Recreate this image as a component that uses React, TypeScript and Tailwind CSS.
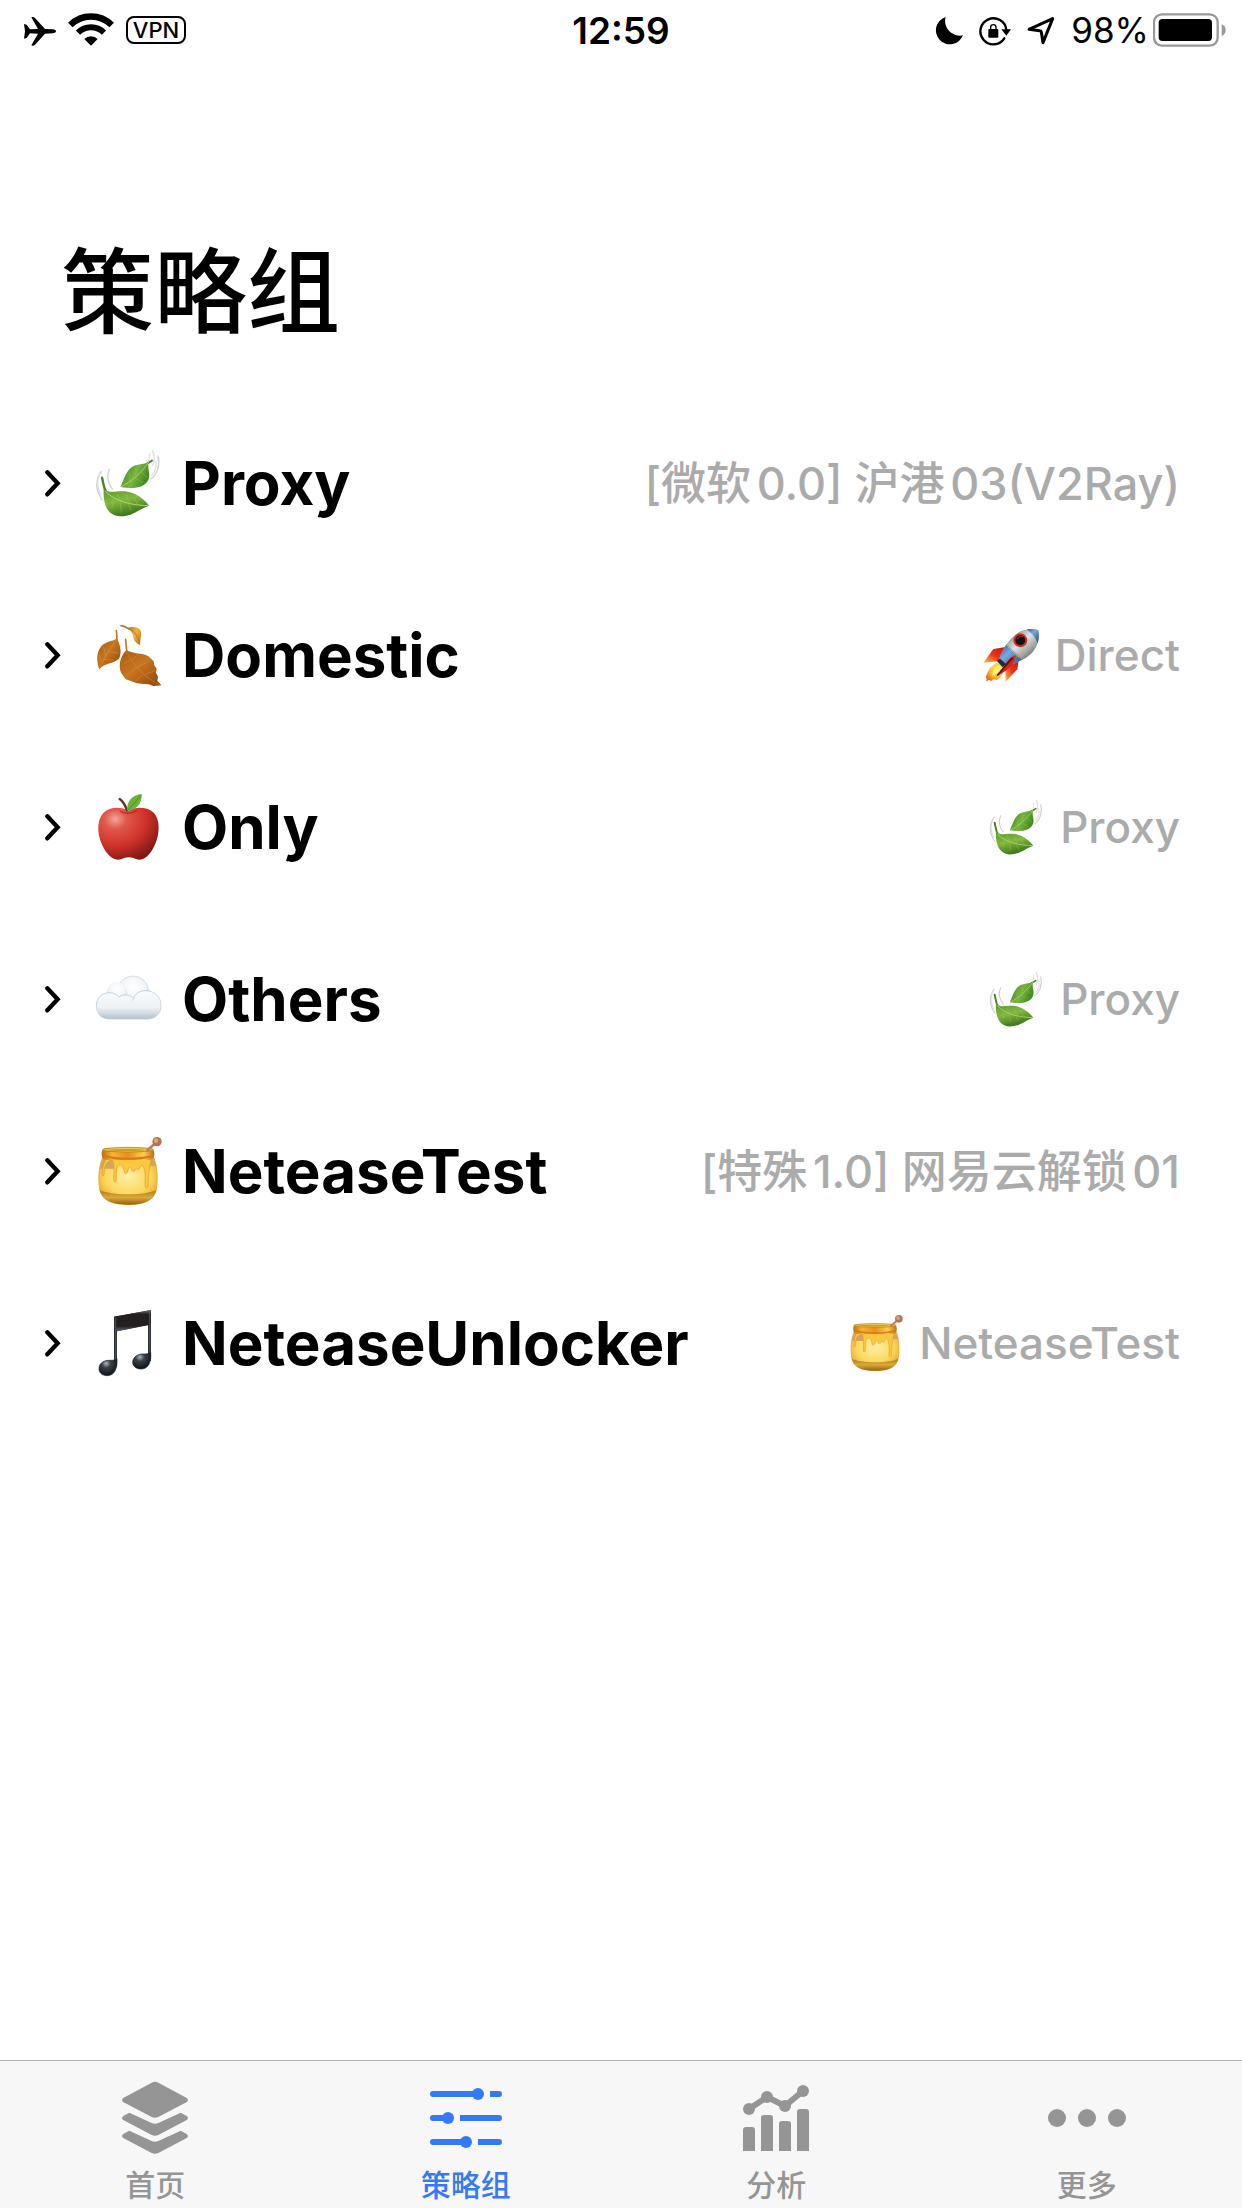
import type { ReactNode } from "react";

function Gradients() {
  return (
    <svg className="absolute h-0 w-0" aria-hidden="true">
      <defs>
        <linearGradient id="leafA" x1="0" y1="0" x2="0.4" y2="1">
          <stop offset="0" stopColor="#569a2c" />
          <stop offset="0.5" stopColor="#83b840" />
          <stop offset="1" stopColor="#3a761c" />
        </linearGradient>
        <linearGradient id="leafB" x1="0" y1="0" x2="1" y2="0.4">
          <stop offset="0" stopColor="#357c1d" />
          <stop offset="0.6" stopColor="#79b53f" />
          <stop offset="1" stopColor="#448a22" />
        </linearGradient>
        <linearGradient id="brownA" x1="0" y1="0" x2="1" y2="1">
          <stop offset="0" stopColor="#a35c14" />
          <stop offset="0.45" stopColor="#c8751f" />
          <stop offset="1" stopColor="#8a440c" />
        </linearGradient>
        <linearGradient id="brownB" x1="0" y1="0" x2="1" y2="0.6">
          <stop offset="0" stopColor="#b96c1c" />
          <stop offset="0.6" stopColor="#f0b040" />
          <stop offset="1" stopColor="#c98420" />
        </linearGradient>
        <radialGradient id="apple" cx="0.28" cy="0.22" r="0.85">
          <stop offset="0" stopColor="#f0a79c" />
          <stop offset="0.22" stopColor="#e2574c" />
          <stop offset="0.6" stopColor="#cf3229" />
          <stop offset="1" stopColor="#7f1712" />
        </radialGradient>
        <radialGradient id="puff" cx="0.5" cy="0.35" r="0.65">
          <stop offset="0" stopColor="#ffffff" />
          <stop offset="0.65" stopColor="#f1f4f7" />
          <stop offset="1" stopColor="#bccad6" />
        </radialGradient>
        <linearGradient id="cloudBase" x1="0" y1="0" x2="0" y2="1">
          <stop offset="0" stopColor="#fafbfc" />
          <stop offset="0.6" stopColor="#eef2f5" />
          <stop offset="1" stopColor="#b4c2cf" />
        </linearGradient>
        <radialGradient id="honey" cx="0.5" cy="0.4" r="0.6">
          <stop offset="0" stopColor="#fff0a8" />
          <stop offset="0.65" stopColor="#fbd75c" />
          <stop offset="1" stopColor="#e9a828" />
        </radialGradient>
        <linearGradient id="honeyBase" x1="0" y1="0" x2="0" y2="1">
          <stop offset="0" stopColor="#a87a1c" />
          <stop offset="0.5" stopColor="#dba93a" />
          <stop offset="1" stopColor="#94640f" />
        </linearGradient>
        <linearGradient id="honeyRim" x1="0" y1="0" x2="1" y2="0">
          <stop offset="0" stopColor="#b96f10" />
          <stop offset="0.2" stopColor="#f5b432" />
          <stop offset="0.5" stopColor="#e8901c" />
          <stop offset="0.8" stopColor="#ffce4a" />
          <stop offset="1" stopColor="#b87112" />
        </linearGradient>
        <radialGradient id="note" cx="0.4" cy="0.3" r="0.7">
          <stop offset="0" stopColor="#aab6c0" />
          <stop offset="0.35" stopColor="#3a4148" />
          <stop offset="1" stopColor="#0f1216" />
        </radialGradient>
        <linearGradient id="beam" x1="0" y1="0" x2="0" y2="1">
          <stop offset="0" stopColor="#6d747c" />
          <stop offset="0.2" stopColor="#231e20" />
          <stop offset="0.75" stopColor="#231e20" />
          <stop offset="1" stopColor="#5a6f84" />
        </linearGradient>
        <linearGradient id="hull" x1="0.2" y1="0.1" x2="0.85" y2="0.8">
          <stop offset="0" stopColor="#6b7276" />
          <stop offset="0.45" stopColor="#dfe3e2" />
          <stop offset="0.75" stopColor="#a0a39f" />
          <stop offset="1" stopColor="#4c5050" />
        </linearGradient>
        <linearGradient id="hullBlue" x1="0" y1="0" x2="1" y2="1">
          <stop offset="0" stopColor="#2f568f" />
          <stop offset="0.4" stopColor="#7ba8de" />
          <stop offset="1" stopColor="#244678" />
        </linearGradient>
        <linearGradient id="fin" x1="1" y1="0" x2="0" y2="1">
          <stop offset="0" stopColor="#b81710" />
          <stop offset="0.55" stopColor="#e8331c" />
          <stop offset="1" stopColor="#ffc93c" />
        </linearGradient>
        <radialGradient id="flame" cx="0.65" cy="0.35" r="0.7">
          <stop offset="0" stopColor="#fff36a" />
          <stop offset="0.6" stopColor="#fbc02d" />
          <stop offset="1" stopColor="#e8701a" />
        </radialGradient>
      </defs>
    </svg>
  );
}

type GlyphProps = { className: string };

function LeafEmoji({ className }: GlyphProps) {
  return (
    <svg className={className} viewBox="222 57 204 204" fill="none" aria-hidden="true">
      <g stroke="#cfcfcf" strokeWidth="4" strokeLinecap="round">
        <path d="M244 124C226 150 226 180 246 210" />
        <path d="M238 134C230 155 232 175 242 195" stroke="#dedede" />
        <path d="M268 118C259 138 264 160 277 177" />
        <path d="M397 62C405 76 404 92 398 106" stroke="#dedede" />
        <path d="M414 78C421 104 412 134 392 147" />
        <path d="M406 92C412 108 406 124 396 136" stroke="#dedede" />
        <path d="M388 72C390 80 389 86 386 92" stroke="#e2e2e2" />
      </g>
      <path d="M246 143C250 158 250 170 258 186" stroke="#4a8226" strokeWidth="7" strokeLinecap="round" />
      <path d="M251 176C249 215 258 257 300 259C340 259 355 238 387 227C372 207 347 187 315 184C287 182 268 192 251 176Z" fill="url(#leafA)" />
      <path d="M256 184C285 214 335 226 385 227" stroke="#b4d472" strokeWidth="3" />
      <path d="M280 206L278 232M300 216L304 244M325 222L334 242M292 192L300 214M318 194L328 220M342 203L352 223" stroke="#a0c85a" strokeWidth="2" opacity="0.7" />
      <path d="M380 102L396 92" stroke="#4a8226" strokeWidth="6" strokeLinecap="round" />
      <path d="M301 171C313 150 318 112 350 105C366 101 376 102 386 95C381 115 393 132 385 150C372 174 340 178 301 171Z" fill="url(#leafB)" />
      <path d="M303 170C335 155 362 130 386 97" stroke="#aed070" strokeWidth="3" />
      <path d="M330 154L328 128M348 140L348 114M345 144L368 158M362 126L382 142" stroke="#98c352" strokeWidth="2" opacity="0.7" />
    </svg>
  );
}

function FallenLeafEmoji({ className }: GlyphProps) {
  return (
    <svg className={className} viewBox="222 573 204 204" fill="none" aria-hidden="true">
      <path d="M303 587C312 588 318 591 325 596M289 602C290 612 292 620 290 630M317 628C319 642 317 654 322 668" stroke="#bf7a25" strokeWidth="5" strokeLinecap="round" />
      <path d="M321 594C335 589 356 590 362 602C366 616 359 630 361 646C350 640 341 634 340 621C339 608 331 600 321 594Z" fill="url(#brownB)" />
      <path d="M324 596C345 602 354 620 359 640" stroke="#a8641a" strokeWidth="2" />
      <path d="M238 718C227 690 230 658 250 643C266 632 282 634 291 624C301 645 307 672 296 687C280 702 254 698 238 718Z" fill="url(#brownA)" />
      <path d="M239 715C250 685 272 655 290 628M246 697L237 674M258 676L250 650M252 688L280 690M266 664L296 670" stroke="#dc963e" strokeWidth="2" opacity="0.8" />
      <path d="M318 661C300 680 294 712 304 730L312 741L318 748L334 754L350 760L372 762L386 763L400 768L424 766L412 752L414 740L408 728L410 716L403 706L401 694L391 684C378 668 345 674 318 661Z" fill="url(#brownA)" />
      <path d="M319 664C340 705 375 745 420 765M332 690L312 700M348 712L322 735M368 735L345 754M335 690L356 672M352 712L388 692M374 733L406 722" stroke="#d98f38" strokeWidth="2" opacity="0.8" />
    </svg>
  );
}

function AppleEmoji({ className }: GlyphProps) {
  return (
    <svg className={className} viewBox="222 69 204 204" fill="none" aria-hidden="true">
      <path d="M325 122C347 109 384 110 402 129C424 154 418 206 397 239C384 260 368 273 350 268C334 260 318 260 303 268C285 273 267 260 254 239C232 204 227 156 249 130C268 110 303 109 325 122Z" fill="url(#apple)" />
      <path d="M302 124C314 132 334 132 350 122" stroke="#9c1f18" strokeWidth="4" strokeLinecap="round" opacity="0.6" />
      <path d="M299 87C309 94 316 106 321 121" stroke="#5a3420" strokeWidth="7" strokeLinecap="round" />
      <path d="M322 122C319 94 336 75 365 72C367 99 350 121 322 122Z" fill="#6cb33a" />
      <path d="M324 120C336 108 350 92 362 76" stroke="#4b8d25" strokeWidth="3" />
    </svg>
  );
}

function CloudEmoji({ className }: GlyphProps) {
  return (
    <svg className={className} viewBox="222 585 204 204" fill="none" aria-hidden="true">
      <circle cx="339" cy="665" r="47" fill="url(#puff)" stroke="#c6d1db" strokeWidth="2" />
      <circle cx="291" cy="667" r="31" fill="url(#puff)" />
      <path d="M269 747C244 747 229 731 229 707C229 684 246 668 268 668C280 668 290 673 297 681C312 671 329 674 338 683C347 668 362 661 380 662C406 664 423 682 423 706C423 731 406 747 382 747Z" fill="url(#cloudBase)" />
      <path d="M297 681C312 671 329 674 338 683M338 692C342 670 362 660 382 662M229 707C229 684 246 668 268 668C280 668 290 673 297 681" stroke="#c6d1db" strokeWidth="3" />
      <path d="M229 707C229 731 244 747 269 747H382C406 747 423 731 423 706C423 682 406 664 380 662" stroke="#b8c5d1" strokeWidth="2" />
    </svg>
  );
}

function HoneyEmoji({ className }: GlyphProps) {
  return (
    <svg className={className} viewBox="222 81 204 204" fill="none" aria-hidden="true">
      <path d="M248 142C236 170 234 208 239 238C245 266 268 284 325 284C382 284 403 266 409 238C414 208 412 170 401 142Z" fill="url(#honey)" stroke="#dc9c26" strokeWidth="2" />
      <path d="M248 142L239 176H282V148ZM401 142L410 168H388V148Z" fill="#d6a45c" />
      <path d="M239 240C270 257 380 257 409 240C403 266 382 284 325 284C268 284 245 266 239 240Z" fill="url(#honeyBase)" />
      <path d="M262 142H396C390 160 386 180 384 228C384 236 375 236 375 228C376 205 378 182 368 166C362 160 360 184 352 178C346 170 344 190 338 184C332 172 330 168 326 176C320 196 314 196 312 180C310 160 294 158 290 176C288 190 289 200 288 212C286 218 281 216 281 210C282 185 284 170 278 150C262 150 252 165 252 194C250 200 246 198 247 190C248 170 252 155 262 142Z" fill="#fbc840" stroke="#e0982a" strokeWidth="2" />
      <rect x="245" y="114" width="158" height="36" rx="15" fill="url(#honeyRim)" />
      <path d="M256 139C290 149 358 149 394 139" stroke="#dc761c" strokeWidth="6" strokeLinecap="round" />
      <ellipse cx="324" cy="119" rx="76" ry="7" fill="#f4c545" stroke="#a8751a" strokeWidth="2" />
      <ellipse cx="318" cy="120" rx="56" ry="3" fill="#c99a3a" />
      <path d="M382 121L406 100" stroke="#bd7f5c" strokeWidth="8" strokeLinecap="round" />
      <circle cx="411" cy="95" r="14" fill="#b67450" />
      <circle cx="408" cy="92" r="7" fill="#d7a384" />
    </svg>
  );
}

function MusicEmoji({ className }: GlyphProps) {
  return (
    <svg className={className} viewBox="222 597 204 204" fill="none" aria-hidden="true">
      <path d="M282 620L393 600V752H384V646L291 664V770H282Z" fill="#2b3036" />
      <path d="M282 620L393 600V643L291 664Z" fill="url(#beam)" />
      <path d="M287 622V768M389 604V748" stroke="#4b535c" strokeWidth="3" />
      <path d="M291 745C293 778 282 797 262 797C246 797 236 788 237 774C238 758 254 750 270 751C280 751 286 750 291 745Z" fill="url(#note)" stroke="#1e2933" strokeWidth="2" />
      <path d="M392 726C395 758 384 777 364 777C348 777 337 768 338 755C340 739 355 731 371 732C381 732 388 731 392 726Z" fill="url(#note)" stroke="#1e2933" strokeWidth="2" />
    </svg>
  );
}

function RocketEmoji({ className }: GlyphProps) {
  return (
    <svg className={className} viewBox="63 81 168 168" fill="none" aria-hidden="true">
      <path d="M107 188C92 194 80 206 76 220L71 232L74 236L72 244L82 240L88 243L96 238L104 240C118 232 126 216 126 200Z" fill="url(#flame)" />
      <path d="M108 196C98 204 92 214 90 226C104 224 114 214 118 202Z" fill="#fff27a" />
      <path d="M136 140L94 147L64 188L106 184L120 176Z" fill="url(#fin)" />
      <path d="M172 168L166 208L131 245L130 204L142 186Z" fill="url(#fin)" />
      <path d="M112 178C116 158 136 120 168 98C188 86 214 86 229 91C233 108 230 134 212 156C196 174 164 192 130 198Z" fill="url(#hull)" />
      <path d="M112 178C116 164 124 146 134 132C146 144 160 160 182 176C164 188 148 194 130 198Z" fill="url(#hullBlue)" />
      <path d="M194 88C208 86 222 88 229 91C232 104 231 118 227 130C220 112 208 98 194 88Z" fill="url(#hullBlue)" />
      <path d="M134 134C148 152 162 166 180 176" stroke="#d8b25c" strokeWidth="3" />
      <circle cx="175" cy="121" r="18" fill="#111417" stroke="#dd2a20" strokeWidth="6" />
      <path d="M166 116C170 110 176 108 182 110" stroke="#7e3230" strokeWidth="4" strokeLinecap="round" />
      <path d="M104 182L114 176L132 192L122 202Z" fill="#1d2b3b" />
      <path d="M162 166C150 168 138 178 122 204L102 230C122 220 148 204 156 184Z" fill="#d3261a" />
      <path d="M152 174C138 186 124 206 106 226" stroke="#5d120c" strokeWidth="5" />
    </svg>
  );
}

function StatusBar() {
  return (
    <header className="grid h-[60px] grid-cols-[1fr_auto_1fr] items-center px-4">
      <div className="flex items-center gap-3 pl-2">
        <svg className="h-10 w-8" viewBox="72 30 96 120" role="img" aria-label="Airplane mode">
          <path d="M72 72L80 74L90 88L114 87L94 52Q100 49 105 54L135 87L158 88Q168 89 168 94Q168 99 158 100L135 101L105 134Q100 139 94 136L114 101L90 100L80 114L72 116L75 94Z" />
        </svg>
        <svg className="h-10 w-[46px]" viewBox="204 30 138 120" fill="none" stroke="#000" role="img" aria-label="Wi-Fi">
          <path d="M211 75A88 88 0 0 1 335 75" strokeWidth="19" />
          <path d="M234 98A55 55 0 0 1 312 98" strokeWidth="18" />
          <path d="M273 137L253 117A28 28 0 0 1 293 117Z" fill="#000" stroke="none" />
        </svg>
        <span className="flex h-7 w-[60px] items-center justify-center rounded-lg border-2 border-black text-[22px] leading-6 font-medium">VPN</span>
      </div>
      <time className="text-[37px] leading-none font-semibold">12:59</time>
      <div className="flex items-center justify-end gap-4">
        <svg className="h-10 w-7" viewBox="105 30 84 120" role="img" aria-label="Do not disturb">
          <path d="M137 51A42 42 0 1 0 189 106A44 44 0 0 1 137 51Z" />
        </svg>
        <svg className="h-10 w-8" viewBox="243 30 96 120" fill="none" stroke="#000" strokeWidth="7" role="img" aria-label="Rotation lock">
          <path d="M319 115A39 39 0 1 1 325 90" strokeLinecap="round" />
          <path d="M310 88H339L325 107Z" fill="#000" stroke="none" />
          <rect x="271" y="87" width="30" height="26" rx="3" fill="#000" stroke="none" />
          <path d="M278 90V82A8 8 0 0 1 294 82V90" strokeWidth="4" />
        </svg>
        <svg className="h-10 w-7" viewBox="388 30 84 120" fill="none" stroke="#000" strokeWidth="9" strokeLinejoin="round" role="img" aria-label="Location">
          <path d="M394 88L465 56L436 128L431 96Q430 92 426 92Z" />
        </svg>
        <div className="flex items-center gap-1">
          <span className="text-[35px] leading-none">98%</span>
          <svg className="h-10 w-[73px]" viewBox="760 30 219 120" role="img" aria-label="Battery">
            <rect x="763" y="43" width="191" height="94" rx="24" fill="none" stroke="#999" strokeWidth="7" />
            <rect x="777" y="57" width="160" height="66" rx="11" />
            <path d="M966 72Q978 78 978 90Q978 102 966 108Z" fill="#999" />
          </svg>
        </div>
      </div>
    </header>
  );
}

type Group = {
  name: string;
  Icon: (p: GlyphProps) => ReactNode;
  value: string;
  ValueIcon?: (p: GlyphProps) => ReactNode;
};

const groups: Group[] = [
  { name: "Proxy", Icon: LeafEmoji, value: "[微软0.0] 沪港03(V2Ray)" },
  { name: "Domestic", Icon: FallenLeafEmoji, value: "Direct", ValueIcon: RocketEmoji },
  { name: "Only", Icon: AppleEmoji, value: "Proxy", ValueIcon: LeafEmoji },
  { name: "Others", Icon: CloudEmoji, value: "Proxy", ValueIcon: LeafEmoji },
  { name: "NeteaseTest", Icon: HoneyEmoji, value: "[特殊1.0] 网易云解锁01" },
  { name: "NeteaseUnlocker", Icon: MusicEmoji, value: "NeteaseTest", ValueIcon: HoneyEmoji },
];

function GroupRow({ name, Icon, value, ValueIcon }: Group) {
  return (
    <li>
      <button type="button" className="flex h-[172px] w-full items-center pr-[62px] pl-11 text-left">
        <svg className="mr-8 h-7 w-[18px] shrink-0" viewBox="72 117 54 84" fill="none" stroke="#000" strokeWidth="13" strokeLinecap="round" aria-hidden="true">
          <path d="M82 127L113 160L82 193" />
        </svg>
        <Icon className="mr-5 h-[68px] w-[68px] shrink-0" />
        <span className="text-[60px] leading-none font-bold">{name}</span>
        {ValueIcon ? (
          <span className="ml-auto flex items-center gap-4 text-[44px] leading-none font-medium text-[#ababab]">
            <ValueIcon className="h-14 w-14 shrink-0" />
            {value}
          </span>
        ) : (
          <span className="ml-auto text-[45px] leading-none font-medium text-[#ababab] [text-autospace:normal]">{value}</span>
        )}
      </button>
    </li>
  );
}

function LayersIcon({ className }: GlyphProps) {
  return (
    <svg className={className} viewBox="108 84 240 240" fill="currentColor" aria-hidden="true">
      <path d="M218 98Q228 93 238 98L322 143Q332 150 322 157L238 201Q228 206 218 201L134 157Q124 150 134 143Z" />
      <path d="M151 188L218 219Q228 223 238 219L305 188L322 197Q332 204 322 211L238 255Q228 260 218 255L134 211Q124 204 134 197Z" />
      <path d="M151 242L218 273Q228 277 238 273L305 242L322 251Q332 258 322 265L238 309Q228 314 218 309L134 265Q124 258 134 251Z" />
    </svg>
  );
}

function SlidersIcon({ className }: GlyphProps) {
  return (
    <svg className={className} viewBox="1038 84 240 240" fill="currentColor" aria-hidden="true">
      <path d="M1059 123H1194V141H1059A9 9 0 0 1 1059 123ZM1230 123H1257A9 9 0 0 1 1257 141H1230Z" />
      <circle cx="1194" cy="132" r="18" />
      <path d="M1059 195H1104V213H1059A9 9 0 0 1 1059 195ZM1140 195H1257A9 9 0 0 1 1257 213H1140Z" />
      <circle cx="1104" cy="204" r="18" />
      <path d="M1059 267H1158V285H1059A9 9 0 0 1 1059 267ZM1194 267H1257A9 9 0 0 1 1257 285H1194Z" />
      <circle cx="1158" cy="276" r="18" />
    </svg>
  );
}

function ChartIcon({ className }: GlyphProps) {
  return (
    <svg className={className} viewBox="111 84 240 240" fill="currentColor" aria-hidden="true">
      <path d="M132 303V240Q132 231 141 231H159Q168 231 168 240V303ZM186 303V204Q186 195 195 195H213Q222 195 222 204V303ZM240 303V222Q240 213 249 213H267Q276 213 276 222V303ZM294 303V186Q294 177 303 177H321Q330 177 330 186V303Z" />
      <path d="M150 177L204 141L258 168L312 123" fill="none" stroke="currentColor" strokeWidth="18" />
      <circle cx="150" cy="177" r="18" />
      <circle cx="204" cy="141" r="18" />
      <circle cx="258" cy="168" r="18" />
      <circle cx="312" cy="123" r="18" />
    </svg>
  );
}

function MoreIcon({ className }: GlyphProps) {
  return (
    <svg className={className} viewBox="1041 84 240 240" fill="currentColor" aria-hidden="true">
      <circle cx="1071" cy="204" r="27" />
      <circle cx="1161" cy="204" r="27" />
      <circle cx="1251" cy="204" r="27" />
    </svg>
  );
}

const tabs = [
  { label: "首页", Icon: LayersIcon, active: false },
  { label: "策略组", Icon: SlidersIcon, active: true },
  { label: "分析", Icon: ChartIcon, active: false },
  { label: "更多", Icon: MoreIcon, active: false },
];

function TabBar() {
  return (
    <nav className="grid grid-cols-4 border-t border-[#b2b2b2] bg-[#f7f7f7] pt-[17px] pb-1">
      {tabs.map(({ label, Icon, active }) => (
        <button
          key={label}
          type="button"
          aria-current={active ? "page" : undefined}
          className={`flex flex-col items-center gap-2 text-[30px] leading-[38px] font-medium ${active ? "text-[#347af6]" : "text-[#959595]"}`}
        >
          <Icon className="h-20 w-20" />
          {label}
        </button>
      ))}
    </nav>
  );
}

export default function App() {
  return (
    <div lang="zh-CN" className={`flex min-h-screen flex-col bg-white text-black font-["Inter","Noto_Sans_CJK_SC",sans-serif]`}>
      <Gradients />
      <StatusBar />
      <main className="grow">
        <h1 className="mt-[177px] ml-[61px] text-[93px] leading-[110px] font-medium">策略组</h1>
        <ul className="mt-[50px]">
          {groups.map((g) => (
            <GroupRow key={g.name} {...g} />
          ))}
        </ul>
      </main>
      <TabBar />
    </div>
  );
}
